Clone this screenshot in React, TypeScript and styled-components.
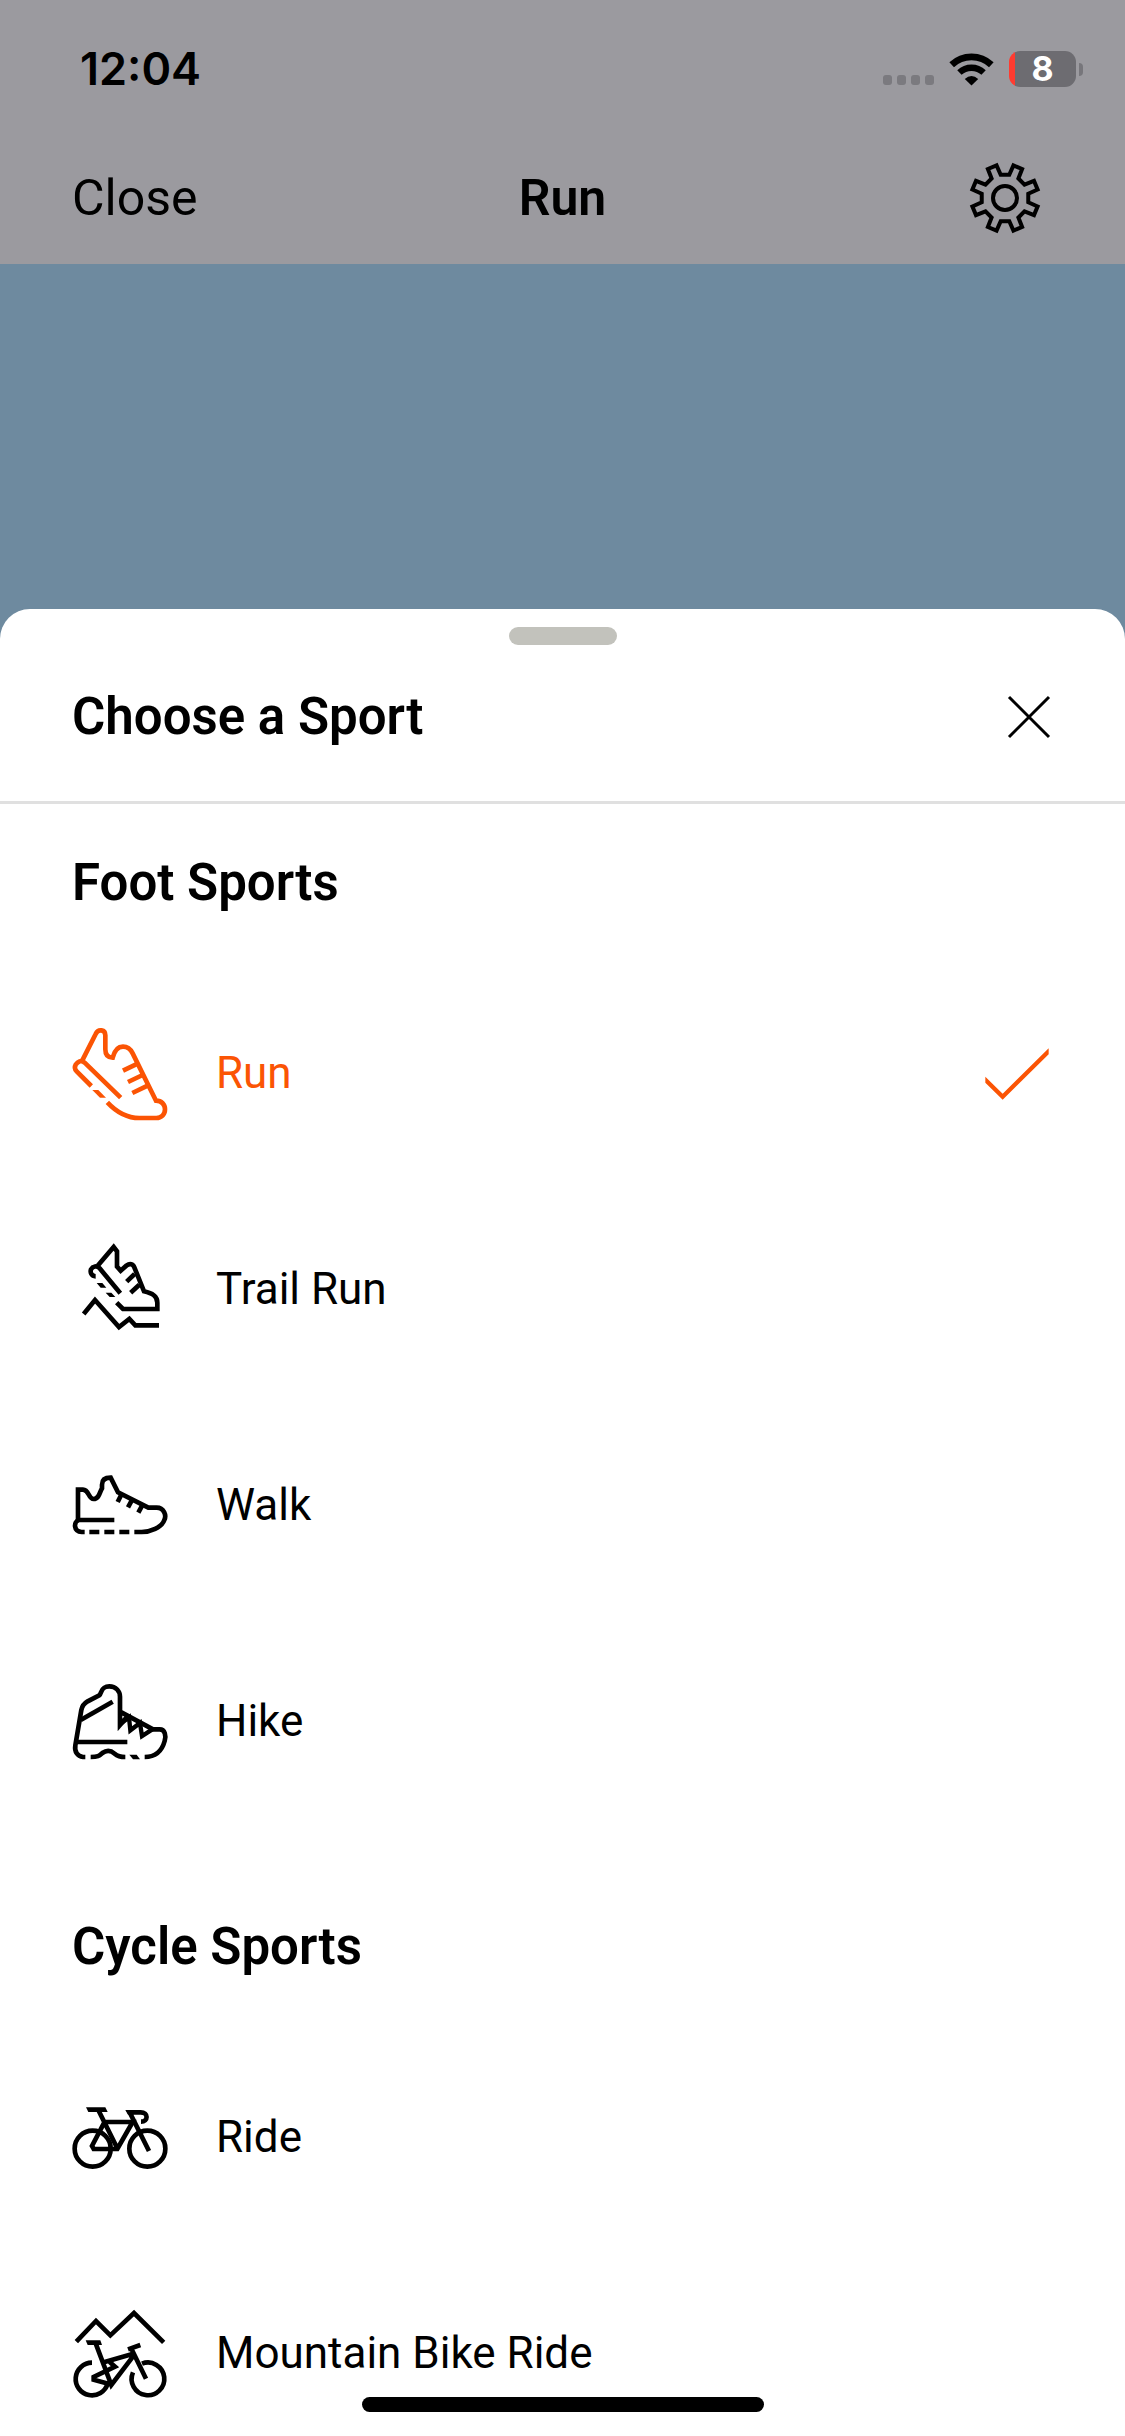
import React, { useState } from "react";
import styled, { createGlobalStyle } from "styled-components";

const GlobalStyle = createGlobalStyle`
  *, *::before, *::after { box-sizing: border-box; }
  body { margin: 0; background: #6e8a9f; }
  button { font: inherit; color: inherit; background: none; border: 0; padding: 0; cursor: pointer; }
  h1, h2, p { margin: 0; }
  svg { display: block; flex: none; overflow: visible; }
`;

const Page = styled.div`
  display: flex;
  flex-direction: column;
  height: 100vh;
  overflow: hidden;
  background: #6e8a9f;
  color: #000;
  font-family: Roboto, "Liberation Sans", sans-serif;
`;

const TopArea = styled.header`
  flex: none;
  background: #9b9a9f;
`;

const StatusBar = styled.div`
  display: flex;
  align-items: center;
  justify-content: space-between;
  height: 132px;
  padding: 6px 42px 0 80px;
  font-family: Inter, "Liberation Sans", sans-serif;
`;

const Clock = styled.time`
  font-size: 45px;
  font-weight: 600;
  line-height: 48px;
`;

const StatusIcons = styled.div`
  display: flex;
  align-items: center;
  gap: 15px;
`;

const SignalDots = styled.div`
  display: flex;
  gap: 5px;
  padding-top: 22px;

  span {
    width: 9px;
    height: 10px;
    border-radius: 3px;
    background: #7b7a7f;
  }
`;

const BatteryWrap = styled.div`
  display: flex;
  align-items: center;
  gap: 3px;
`;

const Battery = styled.div`
  display: flex;
  align-items: center;
  justify-content: center;
  width: 67px;
  height: 36px;
  border-radius: 11px;
  background: linear-gradient(to right, #ff3b30 6px, #6d6c71 6px);
  color: #fff;
  font-size: 34px;
  font-weight: 700;
  line-height: 48px;
`;

const BatteryTip = styled.div`
  width: 4px;
  height: 13px;
  border-radius: 0 4px 4px 0;
  background: #77767b;
`;

const NavBar = styled.nav`
  display: grid;
  grid-template-columns: 1fr auto 1fr;
  align-items: center;
  height: 132px;
  padding: 0 72px;
  font-size: 50px;
  line-height: 60px;
`;

const CloseButton = styled.button`
  justify-self: start;
  font-weight: 400;
`;

const NavTitle = styled.h1`
  font-size: 50px;
  font-weight: 600;
`;

const IconButton = styled.button`
  justify-self: end;
`;

const Sheet = styled.section`
  display: flex;
  flex-direction: column;
  height: 75vh;
  margin-top: auto;
  padding-top: 18px;
  border-radius: 30px 30px 0 0;
  background: #fff;
`;

const Grabber = styled.div`
  flex: none;
  align-self: center;
  width: 108px;
  height: 18px;
  border-radius: 9px;
  background: #c2c2bc;
`;

const SheetHeader = styled.div`
  display: flex;
  flex: none;
  align-items: center;
  justify-content: space-between;
  padding: 42px 72px 54px;
  border-bottom: 3px solid #e0e0e0;
`;

const Heading = styled.h2`
  font-size: 51px;
  font-weight: 600;
  line-height: 60px;
`;

const SportList = styled.div`
  flex: 1;
  min-height: 0;
  overflow-y: auto;
  scrollbar-width: none;
`;

const Group = styled.section`
  & + & { padding-top: 40px; }
`;

const GroupHeader = styled.div`
  height: 160px;
  padding: 49px 72px 0;
`;

const SportRow = styled.button<{ $selected: boolean }>`
  display: flex;
  align-items: center;
  gap: 48px;
  width: 100%;
  height: 216px;
  padding: 0 72px;
  color: ${(p) => (p.$selected ? "#fb5404" : "#000")};
  font-size: 44px;
  font-weight: 400;
  line-height: 54px;
  text-align: left;
`;

const SportName = styled.span`
  flex: 1;
  padding-top: 2px;
`;

const HomeIndicator = styled.div`
  position: fixed;
  bottom: 24px;
  left: 50%;
  width: 402px;
  height: 15px;
  margin-left: -201px;
  border-radius: 8px;
  background: #000;
`;

const GEAR = Array.from({ length: 8 }, (_, i) => {
  const mid = 22.5 + i * 45;
  return [[-12, 71], [-8, 101], [8, 101], [12, 71]]
    .map(([d, r]) => {
      const a = ((mid + d) * Math.PI) / 180;
      return `${(Math.sin(a) * r).toFixed(1)},${(-Math.cos(a) * r).toFixed(1)}`;
    })
    .join(" ");
}).join(" ");

const GearIcon = () => (
  <svg width="96" height="96" viewBox="-144 -144 288 288" fill="none" stroke="currentColor" strokeWidth="12" aria-hidden="true">
    <polygon points={GEAR} />
    <circle r="36" />
  </svg>
);

const WifiIcon = () => (
  <svg width="45" height="33" viewBox="-67 -97 134 98" fill="none" stroke="#000" aria-hidden="true">
    <path d="M-59 -62A86 86 0 0 1 59 -62" strokeWidth="20" />
    <path d="M-36 -39A53 53 0 0 1 36 -39" strokeWidth="19" />
    <path d="M0 0L-20 -20Q0 -37 20 -20Z" fill="#000" stroke="none" />
  </svg>
);

const CrossIcon = () => (
  <svg width="48" height="48" viewBox="0 0 48 48" fill="none" stroke="currentColor" strokeWidth="3" aria-hidden="true">
    <path d="M4 4L44 44M44 4L4 44" />
  </svg>
);

const CheckIcon = () => (
  <svg width="72" height="72" viewBox="243 108 216 216" fill="currentColor" aria-hidden="true">
    <path d="M256 230L308 281L446 145V163L308 299L256 248Z" />
  </svg>
);

type GlyphProps = { box: string; children: React.ReactNode };

const Glyph = ({ box, children }: GlyphProps) => (
  <svg width="96" height="96" viewBox={box} fill="none" stroke="currentColor" strokeWidth="14" aria-hidden="true">
    {children}
  </svg>
);

const RunIcon = () => (
  <Glyph box="66 72 288 288">
    <path d="M97 181L137 102C145 85 166 89 166 106V148C166 164 172 173 188 173C194 150 207 140 219 140C235 140 243 150 248 160L318 302C335 302 345 314 345 328C345 343 334 354 319 354H268C230 354 202 339 172 307" />
    <path d="M212 293L104 188C93 178 83 186 77 194C72 203 75 209 80 214L124 258" />
    <path d="M263 191L219 212M278 225L234 246M293 257L247 279" />
    <path d="M127 270H145L168 293H150Z" fill="currentColor" stroke="none" />
  </Glyph>
);

const TrailRunIcon = () => (
  <Glyph box="66 60 288 288">
    <path d="M143 137L191 81L201 94V140L212 152L229 137C240 129 249 132 253 142L282 214C307 220 322 228 322 248V267H219L200 248" />
    <path d="M211 220L149 145C141 135 128 139 123 148C120 157 124 169 137 169" />
    <path d="M254 162L230 185M268 194L242 218" />
    <path d="M140 189H157L169 203H152ZM167 218H184L196 231H179Z" fill="currentColor" stroke="none" />
    <path d="M101 282L135 240L207 321L238 297L256 316H327" />
  </Glyph>
);

const WalkIcon = () => (
  <Glyph box="66 18 288 288">
    <path d="M84 210V119H99C118 119 114 147 131 147C148 147 149 125 156 115V104C156 88 166 83 182 83L204 127L295 173H320C342 173 350 196 343 210C335 233 300 246 275 246H253" />
    <path d="M193 210H87C70 213 70 246 95 246H104" />
    <path d="M118 246H148M163 246H193M208 246H238" />
    <path d="M215 132L203 156M247 148L234 172M278 164L265 188" />
  </Glyph>
);

const HikeIcon = () => (
  <Glyph box="66 36 288 288">
    <path d="M106 291H99C82 289 73 275 76 256L94 150C97 135 103 130 113 124L148 106C156 100 151 79 178 79C198 79 210 94 210 110V195L230 172M210 155L309 208H329C345 208 349 227 344 243C335 276 314 291 284 291" />
    <path d="M92 180L188 125" />
    <path d="M82 246H232" />
    <path d="M122 291C145 291 148 287 157 279C170 270 181 270 194 281C203 289 211 291 226 291" />
    <path d="M210 193L237 172L241 211L270 189L276 228L307 208" strokeWidth="13" />
    <path d="M238 284H260L270 298H249Z" fill="currentColor" stroke="none" />
  </Glyph>
);

const RideIcon = () => (
  <Glyph box="66 564 288 288">
    <circle cx="128" cy="746" r="54" />
    <circle cx="292" cy="746" r="54" />
    <path d="M146 632L203 747M163 667L126 738L131 747H202L248 666H160" />
    <path d="M108 622H166L173 636H115Z" fill="currentColor" stroke="none" />
    <path d="M297 753L239 637H272C296 637 295 665 273 665" />
    <path d="M226 630H250V644H234Z" fill="currentColor" stroke="none" />
  </Glyph>
);

const MountainBikeIcon = () => (
  <Glyph box="66 42 288 288">
    <path d="M79 155L138 93L181 136L252 69L341 157" />
    <path d="M126 218A49 49 0 1 0 173 281M276 221A49 49 0 1 1 249 247" />
    <path d="M137 160L184 285L251 197M164 216L250 191M186 284L131 269V261L195 230L179 216" />
    <path d="M246 180L288 266M234 178L271 165" />
    <path d="M107 151H151L156 165H113Z" fill="currentColor" stroke="none" />
  </Glyph>
);

const groups = [
  {
    title: "Foot Sports",
    sports: [
      { name: "Run", Icon: RunIcon },
      { name: "Trail Run", Icon: TrailRunIcon },
      { name: "Walk", Icon: WalkIcon },
      { name: "Hike", Icon: HikeIcon },
    ],
  },
  {
    title: "Cycle Sports",
    sports: [
      { name: "Ride", Icon: RideIcon },
      { name: "Mountain Bike Ride", Icon: MountainBikeIcon },
    ],
  },
];

export default function App() {
  const [selected, setSelected] = useState("Run");

  return (
    <Page>
      <GlobalStyle />
      <TopArea>
        <StatusBar>
          <Clock>12:04</Clock>
          <StatusIcons>
            <SignalDots>
              <span />
              <span />
              <span />
              <span />
            </SignalDots>
            <WifiIcon />
            <BatteryWrap>
              <Battery>8</Battery>
              <BatteryTip />
            </BatteryWrap>
          </StatusIcons>
        </StatusBar>
        <NavBar>
          <CloseButton type="button">Close</CloseButton>
          <NavTitle>{selected}</NavTitle>
          <IconButton type="button" aria-label="Settings">
            <GearIcon />
          </IconButton>
        </NavBar>
      </TopArea>
      <Sheet>
        <Grabber />
        <SheetHeader>
          <Heading>Choose a Sport</Heading>
          <IconButton type="button" aria-label="Dismiss">
            <CrossIcon />
          </IconButton>
        </SheetHeader>
        <SportList>
          {groups.map(({ title, sports }) => (
            <Group key={title}>
              <GroupHeader>
                <Heading>{title}</Heading>
              </GroupHeader>
              {sports.map(({ name, Icon }) => (
                <SportRow
                  key={name}
                  type="button"
                  aria-pressed={name === selected}
                  $selected={name === selected}
                  onClick={() => setSelected(name)}
                >
                  <Icon />
                  <SportName>{name}</SportName>
                  {name === selected && <CheckIcon />}
                </SportRow>
              ))}
            </Group>
          ))}
        </SportList>
      </Sheet>
      <HomeIndicator />
    </Page>
  );
}
